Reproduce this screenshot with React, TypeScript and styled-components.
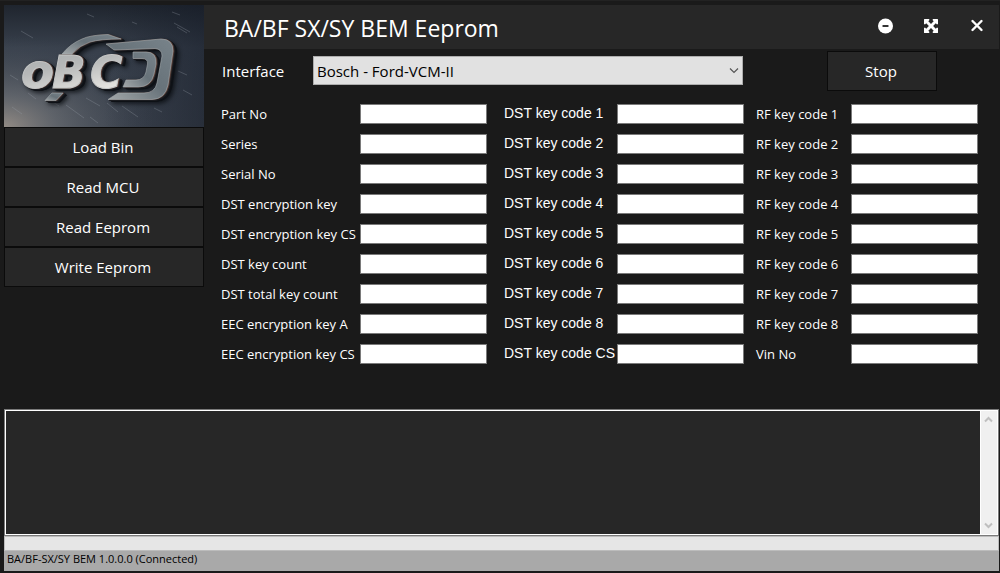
import React from "react";
import styled, { createGlobalStyle } from "styled-components";

const GlobalStyle = createGlobalStyle`
  *, *::before, *::after { box-sizing: border-box; }
  body {
    margin: 0;
    background: #1a1a1a;
    color: #fff;
    font-family: "Open Sans", "Noto Sans", sans-serif;
  }
  button, input, select, textarea { font: inherit; }
`;

const Window = styled.div`
  display: flex;
  flex-direction: column;
  min-height: 100vh;
  padding: 4px 1px 2px 4px;
  border-top: 1px solid #222;
`;

const Upper = styled.div`
  display: flex;
  align-items: flex-start;
`;

const Sidebar = styled.nav`
  display: flex;
  flex-direction: column;
  flex: 0 0 200px;
`;

const LogoArt = styled.svg`
  display: block;
  width: 100%;
  height: 122px;
`;

const Raised = styled.g`
  filter: drop-shadow(1px 0 0 #5a4038) drop-shadow(1px 1px 0 #1b1c20) drop-shadow(2px 1px 0 #0e1116)
    drop-shadow(2px 2px 2px rgba(5, 8, 12, 0.7));
`;

const LogoLetters = styled.text`
  font-family: "DejaVu Sans", sans-serif;
  font-weight: 700;
  font-style: italic;
  fill: url(#metal);
  stroke: #c4c6c6;
  stroke-width: 1px;
`;

const ActionButton = styled.button<{ $width?: string }>`
  width: ${(p) => p.$width ?? "100%"};
  height: 40px;
  padding: 0 2px 0 0;
  border: 1px solid #0b0b0b;
  background: #272727;
  color: #fff;
  font-size: 15px;
  line-height: 20px;
`;

const Main = styled.main`
  flex: 1;
  min-width: 0;
`;

const TitleBar = styled.header`
  display: flex;
  align-items: center;
  justify-content: space-between;
  height: 44px;
  padding: 0 14px 0 20px;
  background: #272727;
`;

const Title = styled.h1`
  margin: 0;
  padding-top: 2px;
  font-size: 23px;
  font-weight: 400;
  line-height: 32px;
`;

const WindowControls = styled.div`
  display: flex;
  gap: 30px;
  padding-bottom: 2px;
`;

const ControlButton = styled.button`
  display: flex;
  width: 16px;
  height: 16px;
  padding: 0;
  border: 0;
  background: none;
  color: #fff;
`;

const InterfaceRow = styled.div`
  display: flex;
  align-items: center;
  padding: 2px 62px 0 18px;
`;

const InterfaceLabel = styled.label`
  flex: 0 0 91px;
  font-size: 15px;
  line-height: 20px;
`;

const SelectWrap = styled.div`
  position: relative;
  flex: 1;
  margin-right: 84px;
  padding-bottom: 2px;
`;

const Select = styled.select`
  display: block;
  appearance: none;
  width: 100%;
  height: 29px;
  padding: 1px 24px 0 3px;
  border: 1px solid #adadad;
  border-radius: 0;
  background: #e1e1e1;
  color: #000;
  font-size: 15px;
`;

const Chevron = styled.svg`
  position: absolute;
  top: 12px;
  right: 4px;
  pointer-events: none;
`;

const Fields = styled.div`
  display: grid;
  grid-template-columns: 266fr 245fr 222fr;
  gap: 12px;
  padding: 13px 21px 0 17px;
`;

const FieldGroup = styled.div<{ $inset?: number }>`
  display: flex;
  flex-direction: column;
  gap: 10px;
  padding-left: ${(p) => p.$inset ?? 0}px;
`;

const Field = styled.div<{ $label: number }>`
  display: grid;
  grid-template-columns: ${(p) => p.$label}px 1fr;
  align-items: center;
  height: 20px;
`;

const FieldLabel = styled.label<{ $plain?: boolean }>`
  font-family: ${(p) => (p.$plain ? '"Liberation Sans", sans-serif' : "inherit")};
  font-size: ${(p) => (p.$plain ? 14 : 13)}px;
  line-height: ${(p) => (p.$plain ? 18 : 20)}px;
  padding-bottom: ${(p) => (p.$plain ? 2 : 0)}px;
  white-space: nowrap;
`;

const FieldInput = styled.input`
  width: 100%;
  min-width: 0;
  height: 20px;
  padding: 0 3px;
  border: 1px solid #7a7a7a;
  background: #fff;
  color: #000;
  font-size: 12px;
`;

const LogPanel = styled.section`
  display: flex;
  flex: 1;
  min-height: 127px;
  margin-top: 45px;
  padding: 1px;
  border: 1px solid #7a7a7a;
  background: #fff;
`;

const LogText = styled.textarea`
  flex: 1;
  padding: 2px;
  border: 0;
  resize: none;
  background: #272727;
  color: #fff;
  font-size: 12px;
`;

const ScrollTrack = styled.div`
  display: flex;
  flex-direction: column;
  justify-content: space-between;
  width: 16px;
  margin-left: 1px;
  background: #f0f0f0;
`;

const ScrollArrow = styled.button`
  display: flex;
  align-items: center;
  justify-content: center;
  height: 17px;
  padding: 0 1px 0 0;
  border: 0;
  background: none;
`;

const ProgressStrip = styled.div`
  height: 15px;
  border: 1px solid #bcbcbc;
  background: #e6e6e6;
`;

const StatusBar = styled.footer`
  height: 20px;
  padding: 0 3px;
  background: #a9a9a9;
  color: #000;
  font-size: 11px;
  line-height: 15px;
`;

const actions = ["Load Bin", "Read MCU", "Read Eeprom", "Write Eeprom"];

const numbered = (prefix: string) => Array.from({ length: 8 }, (_, i) => `${prefix} ${i + 1}`);

const groups = [
  {
    label: 139,
    inset: 0,
    plain: false,
    names: [
      "Part No", "Series", "Serial No", "DST encryption key", "DST encryption key CS",
      "DST key count", "DST total key count", "EEC encryption key A", "EEC encryption key CS",
    ],
  },
  { label: 113, inset: 5, plain: true, names: [...numbered("DST key code"), "DST key code CS"] },
  { label: 95, inset: 0, plain: false, names: [...numbered("RF key code"), "Vin No"] },
];

/* Fine scratches in the wall behind the logo: x1, y1, x2, y2. */
const scratches = [
  [17, 26, 29, 33], [83, 9, 90, 12], [170, 18, 186, 27], [173, 22, 183, 28], [168, 7, 176, 10],
  [6, 70, 14, 75], [49, 97, 55, 101], [82, 93, 96, 101], [103, 98, 114, 107], [118, 101, 134, 112],
  [8, 102, 18, 109], [62, 100, 80, 113], [174, 66, 183, 70], [179, 85, 188, 90], [86, 112, 94, 118],
  [128, 17, 133, 19], [24, 88, 32, 94], [150, 103, 158, 107],
];

/* Steel bars that wrap around the lettering. */
const bars = [
  "M58 49 Q66 39 78 34 Q86 30 104 29.5 L117 34 Q96 34 86 37 Q76 40 68 49 Z",
  "M102 39 L157 34 Q169 34 169 46 L164 80 Q161 94 148 94.5 L104 94.5 L114 88 H140 Q151 88 153 78 L158 51 Q158 44 151 43.5 L110 45 Z",
  "M129 47 H142 Q153 47 152 59 L150 69 Q147 82 134 82 H119 L122 75 H132 Q140 75 142 67 L143.500 59 Q144 53.500 138 53.500 H129 Z",
  "M48 88 H59 L52 95.500 H41 Z",
];

function Logo() {
  return (
    <LogoArt viewBox="0 0 200 122" preserveAspectRatio="xMidYMid slice" role="img" aria-label="oBCD">
      <defs>
        <linearGradient id="wall" x1="0" y1="0" x2="0" y2="1">
          <stop offset="0" stopColor="#1f252e" />
          <stop offset="0.35" stopColor="#38404c" />
          <stop offset="1" stopColor="#3c434e" />
        </linearGradient>
        <radialGradient id="glow" cx="0" cy="1" r="0.75">
          <stop offset="0" stopColor="#a89d92" stopOpacity="0.8" />
          <stop offset="0.35" stopColor="#7b7d80" stopOpacity="0.55" />
          <stop offset="1" stopColor="#4a515c" stopOpacity="0" />
        </radialGradient>
        <linearGradient id="dusk" x1="0" y1="0" x2="1" y2="0">
          <stop offset="0.5" stopColor="#141a26" stopOpacity="0" />
          <stop offset="1" stopColor="#141a26" stopOpacity="0.5" />
        </linearGradient>
        <linearGradient id="metal" x1="0" y1="0" x2="0.4" y2="1">
          <stop offset="0" stopColor="#a4a8aa" />
          <stop offset="0.5" stopColor="#b6b8b8" />
          <stop offset="1" stopColor="#e6e4e0" />
        </linearGradient>
        <linearGradient id="steel" x1="0" y1="1" x2="1" y2="0">
          <stop offset="0" stopColor="#a3a8aa" />
          <stop offset="0.5" stopColor="#68737a" />
          <stop offset="1" stopColor="#78838a" />
        </linearGradient>
      </defs>
      <rect width="200" height="122" fill="url(#wall)" />
      <rect width="200" height="122" fill="url(#glow)" />
      <rect width="200" height="122" fill="url(#dusk)" />
      {scratches.map(([x1, y1, x2, y2]) => (
        <line key={`${x1}-${y1}`} x1={x1} y1={y1} x2={x2} y2={y2} stroke="#9aa0aa" strokeOpacity="0.5" strokeWidth="0.6" />
      ))}
      <Raised>
        {bars.map((path) => (
          <path key={path} d={path} fill="url(#steel)" stroke="#a4abae" strokeWidth="0.6" />
        ))}
        <LogoLetters y="83">
          <tspan x="17" fontSize="48">o</tspan>
          <tspan x="48" fontSize="44">B</tspan>
          <tspan x="86" fontSize="44">C</tspan>
        </LogoLetters>
      </Raised>
    </LogoArt>
  );
}

function App() {
  return (
    <>
      <GlobalStyle />
      <Window>
        <Upper>
          <Sidebar>
            <Logo />
            {actions.map((name) => (
              <ActionButton key={name} type="button">{name}</ActionButton>
            ))}
          </Sidebar>
          <Main>
            <TitleBar>
              <Title>BA/BF SX/SY BEM Eeprom</Title>
              <WindowControls>
                <ControlButton type="button" aria-label="Minimize">
                  <svg width="16" height="16" viewBox="0 0 16 16">
                    <circle cx="8.500" cy="8" r="7.500" fill="currentColor" />
                    <rect x="5.500" y="7" width="6" height="2" rx="0.5" fill="#333" />
                  </svg>
                </ControlButton>
                <ControlButton type="button" aria-label="Maximize">
                  <svg width="16" height="16" viewBox="0 0 16 16" fill="currentColor">
                    <path d="M1 1.600 Q1 1 1.600 1 H6 L6.500 2 L5.300 3.200 L8 5.900 L10.700 3.200 L9.500 2 L10 1 H14.400 Q15 1 15 1.600 V6 L14 6.500 L12.800 5.300 L10.100 8 L12.800 10.700 L14 9.500 L15 10 V14.400 Q15 15 14.400 15 H10 L9.500 14 L10.700 12.800 L8 10.100 L5.300 12.800 L6.500 14 L6 15 H1.600 Q1 15 1 14.400 V10 L2 9.500 L3.200 10.700 L5.900 8 L3.200 5.300 L2 6.500 L1 6 Z" />
                  </svg>
                </ControlButton>
                <ControlButton type="button" aria-label="Close">
                  <svg width="16" height="16" viewBox="0 0 16 16" fill="none" stroke="currentColor" strokeWidth="2.400" strokeLinecap="round">
                    <path d="M3.500 3 L12.500 12 M12.500 3 L3.500 12" />
                  </svg>
                </ControlButton>
              </WindowControls>
            </TitleBar>
            <InterfaceRow>
              <InterfaceLabel htmlFor="interface">Interface</InterfaceLabel>
              <SelectWrap>
                <Select id="interface">
                  <option>Bosch - Ford-VCM-II</option>
                </Select>
                <Chevron width="10" height="6" viewBox="0 0 10 6" fill="none" stroke="#555" strokeWidth="1.2">
                  <path d="M1 0.5 L5 4.5 L9 0.5" />
                </Chevron>
              </SelectWrap>
              <ActionButton type="button" $width="110px">Stop</ActionButton>
            </InterfaceRow>
            <Fields>
              {groups.map((group) => (
                <FieldGroup key={group.label} $inset={group.inset}>
                  {group.names.map((name) => (
                    <Field key={name} $label={group.label}>
                      <FieldLabel htmlFor={name.replace(/ /g, "-")} $plain={group.plain}>{name}</FieldLabel>
                      <FieldInput id={name.replace(/ /g, "-")} type="text" />
                    </Field>
                  ))}
                </FieldGroup>
              ))}
            </Fields>
          </Main>
        </Upper>
        <LogPanel>
          <LogText aria-label="Log" readOnly />
          <ScrollTrack>
            <ScrollArrow type="button" aria-label="Scroll up">
              <svg width="9" height="7" viewBox="0 0 9 7" fill="none" stroke="#bfbfbf" strokeWidth="2">
                <path d="M1 5.500 L4.500 2 L8 5.500" />
              </svg>
            </ScrollArrow>
            <ScrollArrow type="button" aria-label="Scroll down">
              <svg width="9" height="7" viewBox="0 0 9 7" fill="none" stroke="#bfbfbf" strokeWidth="2">
                <path d="M1 1.500 L4.500 5 L8 1.500" />
              </svg>
            </ScrollArrow>
          </ScrollTrack>
        </LogPanel>
        <ProgressStrip />
        <StatusBar>BA/BF-SX/SY BEM 1.0.0.0 (Connected)</StatusBar>
      </Window>
    </>
  );
}

export default App;
